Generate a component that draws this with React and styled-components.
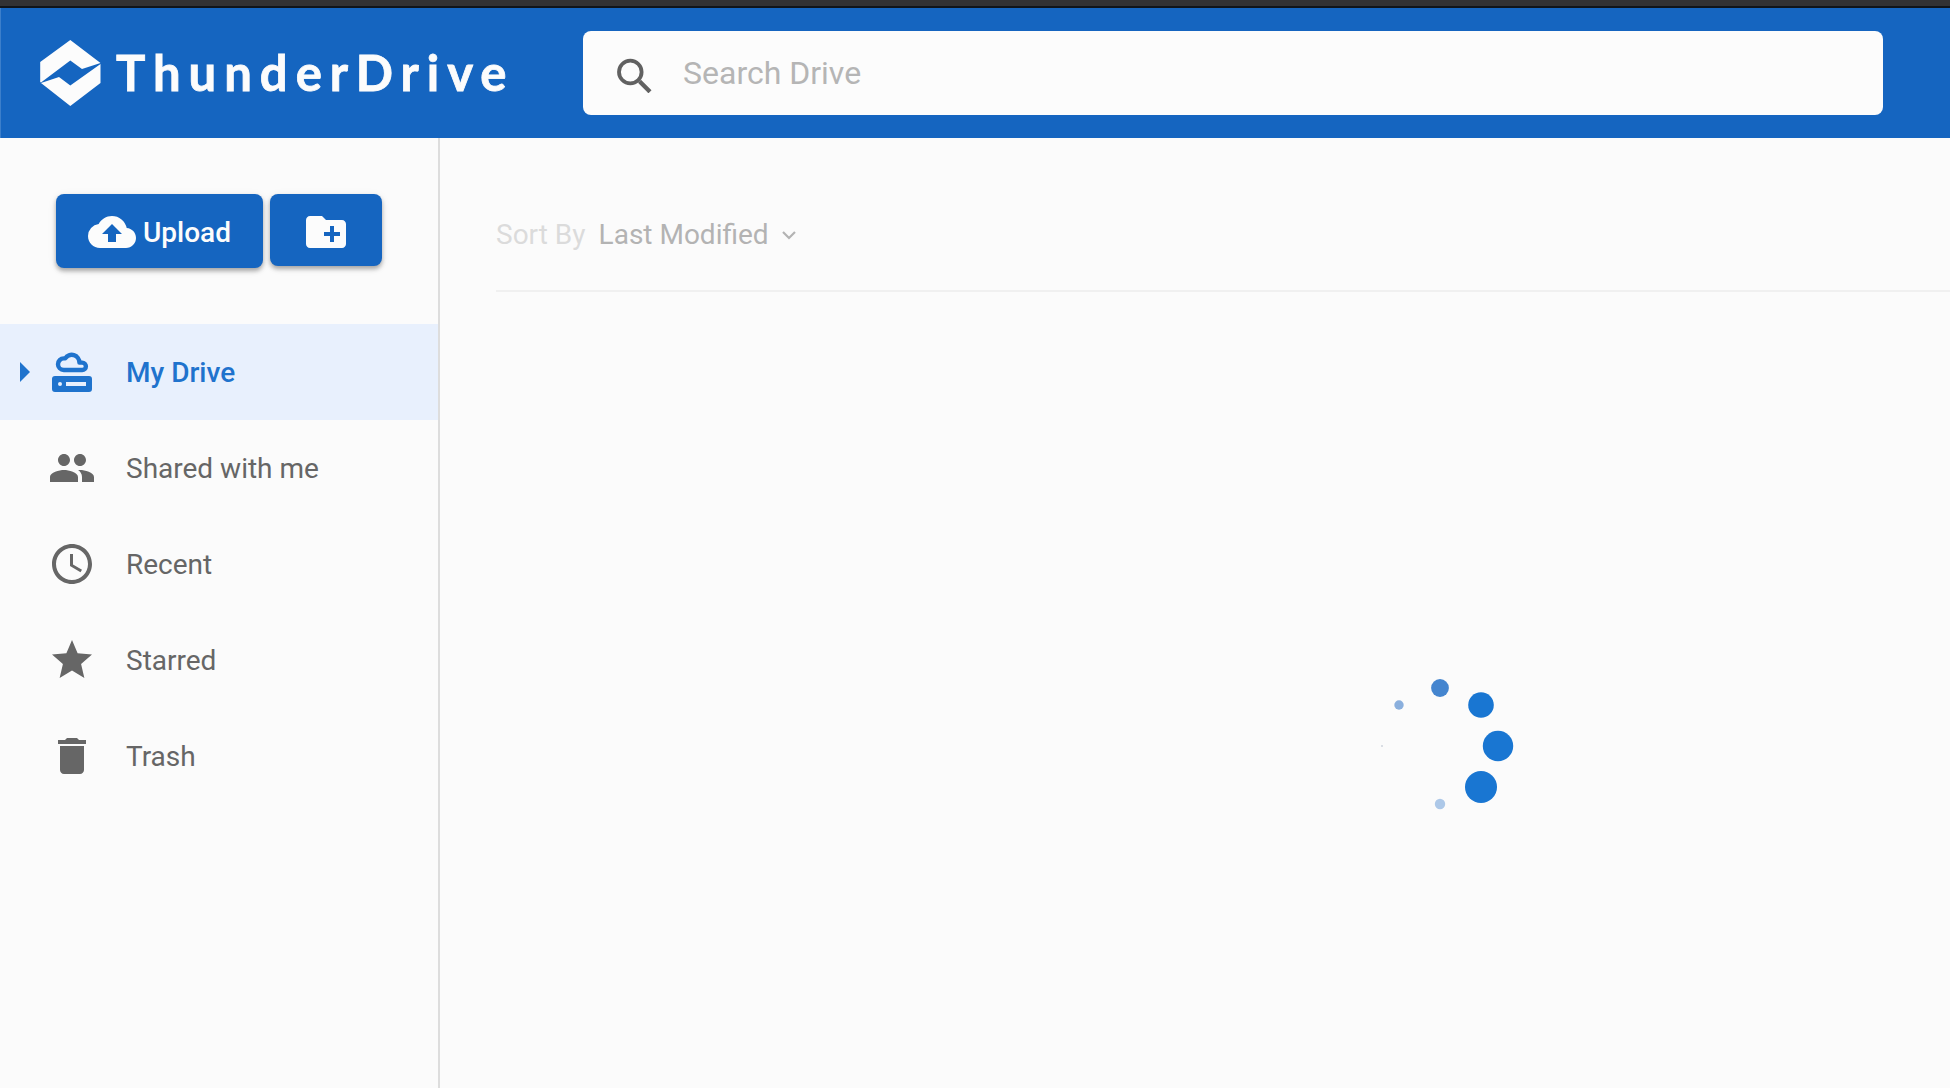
import React from "react";
import styled, { createGlobalStyle } from "styled-components";
import {
  MdAccessTime,
  MdArrowRight,
  MdCloudUpload,
  MdCreateNewFolder,
  MdDelete,
  MdPeople,
  MdStar,
} from "react-icons/md";

const GlobalStyle = createGlobalStyle`
  * {
    box-sizing: border-box;
  }
  body {
    margin: 0;
    background: #fbfbfb;
    font-family: Roboto, "Liberation Sans", sans-serif;
  }
  svg {
    display: block;
    flex-shrink: 0;
  }
`;

const Page = styled.div`
  display: flex;
  flex-direction: column;
  height: 100vh;
  overflow: hidden;
`;

const TopStrip = styled.div`
  height: 8px;
  flex-shrink: 0;
  background: #323234;
  border-bottom: 2px solid #10151b;
`;

const Header = styled.header`
  display: flex;
  align-items: center;
  height: 130px;
  flex-shrink: 0;
  padding: 0 67px 0 39px;
  background: #1565c0;
  border-left: 1px solid #3c7fcb;
`;

const Brand = styled.div`
  display: flex;
  align-items: center;
  width: 543px;
  color: #fcfcfc;
`;

const BrandName = styled.span`
  margin: 0 0 2px 15px;
  font-family: Lato, sans-serif;
  font-size: 49px;
  font-weight: 700;
  line-height: 60px;
  letter-spacing: 8px;
  -webkit-text-stroke: 0.8px currentColor;
`;

const SearchBox = styled.div`
  display: flex;
  align-items: center;
  flex: 1;
  height: 84px;
  padding-left: 32px;
  border-radius: 8px;
  background: #fcfcfc;
  color: #616161;
`;

const SearchInput = styled.input`
  flex: 1;
  margin-left: 28px;
  padding: 0;
  border: 0;
  outline: 0;
  background: transparent;
  font-family: inherit;
  font-size: 32px;
  line-height: 40px;
  &::placeholder {
    color: #b5b5b5;
    opacity: 1;
  }
`;

const Body = styled.div`
  display: flex;
  flex: 1;
`;

const Sidebar = styled.aside`
  width: 440px;
  border-right: 2px solid #dddddd;
`;

const Actions = styled.div`
  display: flex;
  align-items: flex-start;
  gap: 7px;
  height: 186px;
  padding: 56px 0 0 56px;
`;

const ActionButton = styled.button`
  display: flex;
  align-items: center;
  justify-content: center;
  gap: 7px;
  width: ${({ $wide }) => ($wide ? "207px" : "112px")};
  height: ${({ $wide }) => ($wide ? "74px" : "72px")};
  padding: ${({ $wide }) => ($wide ? "2px 0 0" : "4px 0 0")};
  border: 0;
  border-radius: 8px;
  background: #1565c0;
  box-shadow: 0 3px 4px rgba(0, 0, 0, 0.3), 0 2px 10px rgba(0, 0, 0, 0.08);
  color: #fcfcfc;
  font-family: inherit;
  font-size: 28px;
  font-weight: 500;
  svg {
    width: 48px;
    height: 48px;
  }
`;

const NavItem = styled.div`
  display: flex;
  align-items: center;
  height: 96px;
  font-size: 28px;
  font-weight: ${({ $active }) => ($active ? 500 : 400)};
  color: ${({ $active }) => ($active ? "#1f73cd" : "#666666")};
  background: ${({ $active }) => ($active ? "#e8f0fd" : "transparent")};
  svg {
    width: 48px;
    height: 48px;
  }
`;

const Expander = styled.span`
  width: 48px;
`;

const NavLabel = styled.span`
  margin-left: 30px;
`;

const Main = styled.main`
  display: flex;
  flex-direction: column;
  flex: 1;
  padding-left: 56px;
`;

const SortBar = styled.div`
  display: flex;
  align-items: center;
  height: 154px;
  padding-top: 40px;
  border-bottom: 2px solid #f0f0f0;
  font-size: 28px;
  color: #b3b3b3;
`;

const SortLabel = styled.span`
  margin-right: 13px;
  color: #dbdbdb;
`;

const Chevron = styled.svg`
  margin: 2px 0 0 13px;
`;

const Loading = styled.div`
  display: flex;
  justify-content: center;
  padding: 379px 62px 0 0;
  margin-left: 496px;
`;

const navItems = [
  { label: "My Drive", icon: DriveIcon, active: true },
  { label: "Shared with me", icon: MdPeople },
  { label: "Recent", icon: MdAccessTime },
  { label: "Starred", icon: MdStar },
  { label: "Trash", icon: MdDelete },
];

const dots = [
  { x: 75, y: 17, r: 8.9, fill: "#4485cf" },
  { x: 116, y: 34, r: 12.8, fill: "#1976d2" },
  { x: 133, y: 75, r: 15.2, fill: "#1976d2" },
  { x: 116, y: 116, r: 16, fill: "#1976d2" },
  { x: 75, y: 133, r: 5.2, fill: "#adc8e8" },
  { x: 34, y: 34, r: 4.7, fill: "#8aafdd" },
  { x: 17, y: 75, r: 1, fill: "#cfd5dc" },
];

function DriveIcon() {
  return (
    <svg viewBox="0 0 24 24" fill="currentColor">
      <path
        d="M7.900 11a2.900 2.900 0 0 1 0-5.800h.7A3.850 3.850 0 0 1 15.700 7.300H17.100a1.850 1.850 0 0 1 0 3.700z"
        fill="none"
        stroke="currentColor"
        strokeWidth="2.200"
        strokeLinejoin="round"
      />
      <path
        fillRule="evenodd"
        d="M3.500 14h17a1.500 1.500 0 0 1 1.500 1.500v5a1.500 1.500 0 0 1-1.500 1.500h-17A1.500 1.500 0 0 1 2 20.500v-5A1.500 1.500 0 0 1 3.500 14zM5 18a1 1 0 1 0 2 0a1 1 0 1 0-2 0zM9 17v2h10v-2z"
      />
    </svg>
  );
}

const Logo = () => (
  <svg width="61" height="66" viewBox="0 0 61 66" fill="currentColor">
    <path d="M30.300 0L60.500 23L42 29L30.300 20.500L1 42.500L0.200 42V22z" />
    <path d="M60.500 24V43L30.300 66L1 43L19 37L30.300 45.500z" />
  </svg>
);

const SearchIcon = () => (
  <svg width="40" height="40" viewBox="0 0 40 40" fill="none" stroke="currentColor">
    <circle cx="15.300" cy="19" r="11.300" strokeWidth="3.800" />
    <path d="M24.500 28.300L35 38.800" strokeWidth="4.300" />
  </svg>
);

const App = () => {
  return (
    <Page>
      <GlobalStyle />
      <TopStrip />
      <Header>
        <Brand>
          <Logo />
          <BrandName>ThunderDrive</BrandName>
        </Brand>
        <SearchBox>
          <SearchIcon />
          <SearchInput placeholder="Search Drive" />
        </SearchBox>
      </Header>
      <Body>
        <Sidebar>
          <Actions>
            <ActionButton $wide>
              <MdCloudUpload />
              Upload
            </ActionButton>
            <ActionButton aria-label="New folder">
              <MdCreateNewFolder />
            </ActionButton>
          </Actions>
          {navItems.map(({ label, icon: Icon, active }) => (
            <NavItem key={label} $active={active}>
              <Expander>{active && <MdArrowRight />}</Expander>
              <Icon />
              <NavLabel>{label}</NavLabel>
            </NavItem>
          ))}
        </Sidebar>
        <Main>
          <SortBar>
            <SortLabel>Sort By</SortLabel>
            Last Modified
            <Chevron width="14" height="10" viewBox="0 0 14 10" fill="none" stroke="currentColor" strokeWidth="2.2">
              <path d="M1 2l6 6l6-6" />
            </Chevron>
          </SortBar>
          <Loading>
            <svg width="150" height="150" viewBox="0 0 150 150">
              {dots.map((dot, idx) => (
                <circle key={idx} cx={dot.x} cy={dot.y} r={dot.r} fill={dot.fill} />
              ))}
            </svg>
          </Loading>
        </Main>
      </Body>
    </Page>
  );
};

export default App;
